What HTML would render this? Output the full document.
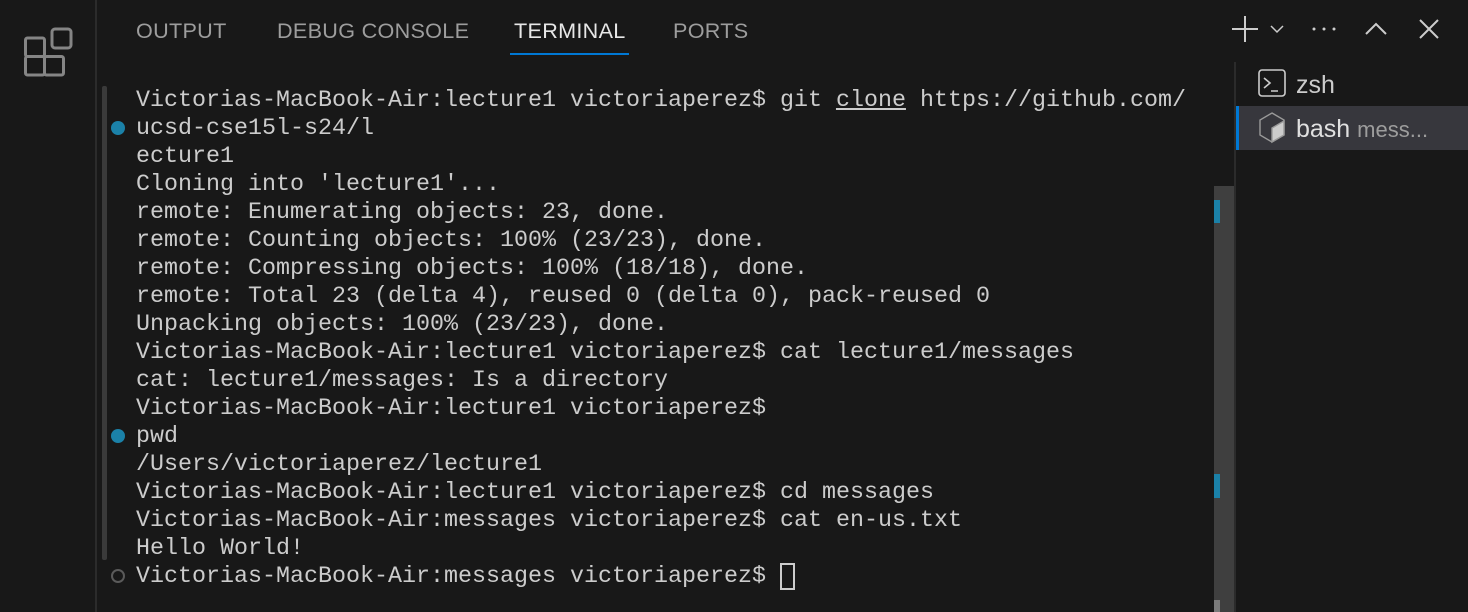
<!DOCTYPE html>
<html><head><style>
html,body{margin:0;padding:0;width:1468px;height:612px;background:#181818;overflow:hidden;position:relative}
.abs{position:absolute}
.tab{position:absolute;top:18px;font:21.6px "Liberation Sans",sans-serif;color:#9d9d9d;letter-spacing:0.3px}
.term{position:absolute;left:136px;top:87px;font:23.33px/28px "Liberation Mono",monospace;color:#cccccc;white-space:pre}
.dot{position:absolute;left:111px;width:14px;height:14px;border-radius:50%;background:#1b81a8}
</style></head><body>
<div class="abs" style="left:0;top:0;width:95px;height:612px;background:#181818;border-right:2px solid #2b2b2b"></div>
<svg class="abs" style="left:22px;top:26px" width="52" height="52" viewBox="0 0 52 52" fill="none" stroke="#858585" stroke-width="3">
<rect x="3.5" y="12" width="19" height="18.5" rx="2"/><rect x="3.5" y="30.5" width="19" height="18.5" rx="2"/><rect x="22.5" y="30.5" width="19" height="18.5" rx="2"/><rect x="30" y="3" width="19" height="19" rx="3"/></svg>

<div class="tab" style="left:136px">OUTPUT</div>
<div class="tab" style="left:277px">DEBUG CONSOLE</div>
<div class="tab" style="left:514px;color:#e7e7e7">TERMINAL</div>
<div class="abs" style="left:510px;top:53px;width:119px;height:2px;background:#0078d4"></div>
<div class="tab" style="left:673px">PORTS</div>

<svg class="abs" style="left:1230px;top:14px" width="220" height="30" viewBox="0 0 220 30" fill="none" stroke="#cccccc" stroke-width="2">
<path d="M15 2v26M2 15h26"/><path d="M41 12l6 6 6-6" stroke-width="1.5"/>
<circle cx="84" cy="15" r="1.5" fill="#ccc" stroke="none"/><circle cx="94" cy="15" r="1.5" fill="#ccc" stroke="none"/><circle cx="104" cy="15" r="1.5" fill="#ccc" stroke="none"/>
<path d="M136 20l10-10 10 10"/><path d="M190 6l18 18M208 6l-18 18"/></svg>

<div class="abs" style="left:102px;top:86px;width:5px;height:474px;background:#3a3a3a;border-radius:2px"></div>
<div class="dot" style="top:121px"></div>
<div class="dot" style="top:429px"></div>
<div class="abs" style="left:111px;top:569px;width:10px;height:10px;border-radius:50%;border:2px solid #5a5a5a"></div>

<div class="term">Victorias-MacBook-Air:lecture1 victoriaperez$ git <span style="text-decoration:underline">clone</span> https://github.com/
ucsd-cse15l-s24/l
ecture1
Cloning into 'lecture1'...
remote: Enumerating objects: 23, done.
remote: Counting objects: 100% (23/23), done.
remote: Compressing objects: 100% (18/18), done.
remote: Total 23 (delta 4), reused 0 (delta 0), pack-reused 0
Unpacking objects: 100% (23/23), done.
Victorias-MacBook-Air:lecture1 victoriaperez$ cat lecture1/messages
cat: lecture1/messages: Is a directory
Victorias-MacBook-Air:lecture1 victoriaperez$ 
pwd
/Users/victoriaperez/lecture1
Victorias-MacBook-Air:lecture1 victoriaperez$ cd messages
Victorias-MacBook-Air:messages victoriaperez$ cat en-us.txt
Hello World!
Victorias-MacBook-Air:messages victoriaperez$ </div>
<div class="abs" style="left:780px;top:563px;width:11px;height:23px;border:2px solid #cccccc"></div>

<div class="abs" style="left:1214px;top:186px;width:20px;height:426px;background:#3f3f3f"></div>
<div class="abs" style="left:1214px;top:200px;width:6px;height:23px;background:#1b81a8"></div>
<div class="abs" style="left:1214px;top:474px;width:6px;height:24px;background:#1b81a8"></div>
<div class="abs" style="left:1214px;top:600px;width:6px;height:12px;background:#7a7a7a"></div>
<div class="abs" style="left:1234px;top:62px;width:2px;height:550px;background:#2b2b2b"></div>

<div class="abs" style="left:1236px;top:106px;width:232px;height:44px;background:#37373d"></div>
<div class="abs" style="left:1236px;top:106px;width:3px;height:44px;background:#0078d4"></div>
<svg class="abs" style="left:1258px;top:69px" width="28" height="28" viewBox="0 0 28 28" fill="none" stroke="#cccccc" stroke-width="1.6">
<rect x="1" y="1" width="26" height="26" rx="3"/><path d="M6 9l6 5-6 5M13 22h7"/></svg>
<div class="abs" style="left:1296px;top:71px;font:25px 'Liberation Sans',sans-serif;color:#cccccc">zsh</div>
<svg class="abs" style="left:1258px;top:112px" width="28" height="32" viewBox="0 0 28 32" fill="none" stroke="#999" stroke-width="1.4">
<path d="M14 1l12 7v15l-12 7-12-7V8z"/><path d="M14 30V16l12-7v14z" fill="#cccccc"/></svg>
<div class="abs" style="left:1296px;top:115px;font:25px 'Liberation Sans',sans-serif;color:#e0e0e0">bash <span style="font-size:22px;color:#9d9d9d">mess...</span></div>
</body></html>
